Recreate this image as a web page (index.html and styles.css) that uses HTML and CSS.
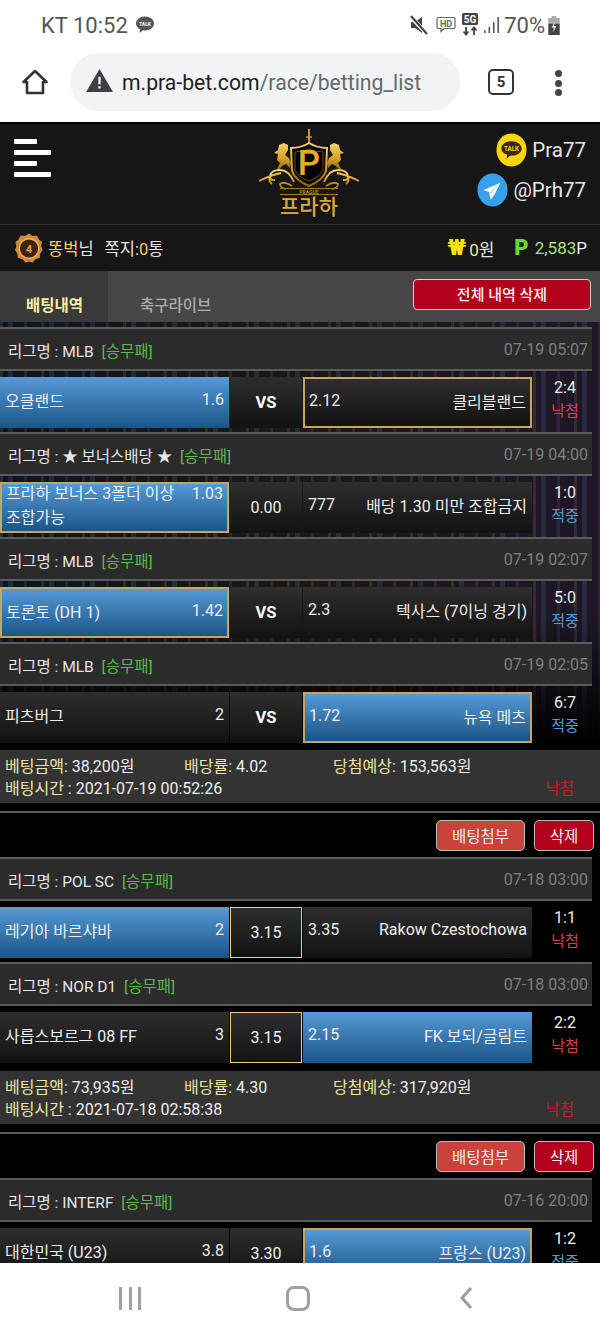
FILE: index.html
```html
<!DOCTYPE html>
<html lang="ko">
<head>
<meta charset="utf-8">
<title>betting list</title>
<link rel="stylesheet" href="styles.css">
</head>
<body>
<div class="page">
  <div class="status">
    <div class="status-left">
      <span>KT 10:52</span>
      <svg class="talk-mini" viewBox="0 0 20 20"><path d="M10 1.500c5 0 9 3 9 7s-4 7-9 7c-.7 0-1.300 0-2-.2L4.500 18l.5-3.800C2.600 13 1 10.900 1 8.500c0-4 4-7 9-7z" fill="#555"/><text x="10" y="10.800" class="talk-mini-t">TALK</text></svg>
    </div>
    <div class="status-right">
      <svg class="ic-mute" viewBox="0 0 22 22"><path d="M3 8h4l7-5v16l-7-5H3z" fill="#444"/><path d="M2 2l18 19" stroke="#fff" stroke-width="4"/><path d="M3 2l16 18" stroke="#444" stroke-width="2.200"/></svg>
      <svg class="ic-hd" viewBox="0 0 20 18"><path d="M2.500 1.500h15a1.500 1.500 0 0 1 1.500 1.500v8a1.500 1.500 0 0 1-1.500 1.500H8l-3 3v-3H2.500A1.500 1.500 0 0 1 1 11V3a1.500 1.500 0 0 1 1.500-1.500z" fill="none" stroke="#666" stroke-width="1.200"/><text x="10" y="10.500" class="hd-t">HD</text></svg>
      <svg class="ic-5g" viewBox="0 0 18 24"><rect x="1" y="0" width="16" height="12" rx="1.500" fill="#444"/><text x="9" y="10" class="g-t">5G</text><path d="M5 14v7M2.500 18.500 5 21.500l2.500-3M13 22v-7M10.500 17.500 13 14.500l2.500 3" stroke="#444" stroke-width="1.800" fill="none"/></svg>
      <svg class="ic-signal" viewBox="0 0 18 20"><path d="M1 16v3M6 12v7M11 7v12M16 1v18" stroke="#555" stroke-width="1.800"/></svg>
      <span class="pct">70%</span>
      <svg class="ic-batt" viewBox="0 0 12 20"><rect x="3.500" y="0" width="5" height="3" fill="#aaa"/><rect y="2" width="12" height="6" fill="#aaa"/><rect y="8" width="12" height="12" fill="#444"/><path d="M7 6 3.500 12H6l-1 5 3.500-6.500H6z" fill="#fff"/></svg>
    </div>
  </div>

  <div class="toolbar">
    <svg class="ic-home" viewBox="0 0 28 28"><path d="M14 3 2.500 14H6v11h16V14h3.500z" fill="none" stroke="#333" stroke-width="2.600" stroke-linejoin="round"/></svg>
    <div class="url">
      <svg class="ic-warn" viewBox="0 0 28 24"><path d="M14 0 28 24H0z" fill="#3c4043"/><path d="M12.800 8h2.400v8h-2.400zM12.800 18h2.400v2.400h-2.400z" fill="#f1f3f4"/></svg>
      <span class="url-host">m.pra-bet.com</span><span class="url-path">/race/betting_list</span>
    </div>
    <div class="tabs-count">5</div>
    <div class="kebab"><i></i><i></i><i></i></div>
  </div>

  <header class="site-head">
    <div class="burger"><i class="short"></i><i></i><i class="short"></i><i></i></div>
    <div class="logo">
      <svg class="logo-art" viewBox="0 0 110 68">
        <defs>
          <linearGradient id="gold" x1="0" y1="0" x2="0" y2="1"><stop offset="0" stop-color="#f7d36a"/><stop offset=".55" stop-color="#d8a22c"/><stop offset="1" stop-color="#8f6512"/></linearGradient>
        </defs>
        <path d="M55 1v15" stroke="#c79a35" stroke-width="2"/><path d="M52 9h6" stroke="#c79a35" stroke-width="1.500"/>
        <path d="M37 20q10 0 18-5 8 5 18 5l-1 23q-3 9-17 15-14-6-17-15z" fill="#0a0805" stroke="url(#gold)" stroke-width="2"/>
        <path d="M41 24q8 0 14-3 6 3 14 3v18q-3 7-14 11-11-4-14-11z" fill="#000" stroke="#6e4f12" stroke-width="1"/>
        <text x="55" y="47" class="logo-p">P</text>
        <path d="M36 40l-4-4-4 2-3 4-2-1 3-6-3-3 1-6-4-1 4-3 1-5 5-2 4 2 0 5-3 5 4 3 2 5z" fill="url(#gold)"/>
        <path d="M74 40l4-4 4 2 3 4 2-1-3-6 3-3-1-6 4-1-4-3-1-5-5-2-4 2 0 5 3 5-4 3-2 5z" fill="url(#gold)"/>
        <path d="M40 54q-5-12-14-12-9 0-10 6 0 5 5 4M27 45q-10 2-22 8M38 58q-8-5-12-2 0 4 6 5M16 48q-2 5 2 8" fill="none" stroke="url(#gold)" stroke-width="1.800"/>
        <path d="M70 54q5-12 14-12 9 0 10 6 0 5-5 4M83 45q10 2 22 8M72 58q8-5 12-2 0 4-6 5M94 48q2 5-2 8" fill="none" stroke="url(#gold)" stroke-width="1.800"/>
        <path d="M26 60.500h58M26 66.500h58" stroke="#a47d22" stroke-width="1"/>
        <text x="55" y="65.500" class="logo-small">PRAGUE</text>
      </svg>
      <span class="logo-kr">프라하</span>
    </div>
    <div class="contacts">
      <div class="contact">
        <svg class="ic-kakao" viewBox="0 0 32 34"><ellipse cx="16" cy="17" rx="15.500" ry="17" fill="#fcd40a"/><path d="M16 8c6 0 10.500 3.300 10.500 7.500S22 23 16 23l-1.500-.1L11 26l.500-4C7.800 20.800 5.500 18.400 5.500 15.500 5.500 11.300 10 8 16 8z" fill="#3e2723"/><text x="16" y="18" class="kk-t">TALK</text></svg>
        <span>Pra77</span>
      </div>
      <div class="contact">
        <svg class="ic-tg" viewBox="0 0 32 34"><ellipse cx="16" cy="17" rx="15.500" ry="17" fill="#37a0ea"/><path d="M24 9.500 6.500 17l6 2 1.500 8 4-5z" fill="#fff"/><path d="M12.500 19 24 9.500 15 21z" fill="#d2e8f7"/></svg>
        <span>@Prh77</span>
      </div>
    </div>
  </header>

  <div class="user-row">
    <div class="user-left">
      <svg class="badge" viewBox="0 0 30 32"><path d="M15 0l4 2.500 4.500-.5 2 4 3.500 3-1 4.500 1.500 4-2.500 4-.5 4.500-4.500 1.500-3 3.500-4-1-4 1-3-3.500L3 26l-.5-4.500L0 17.500l1.500-4-1-4.500L4 6l2-4 4.500.5z" fill="#cf8a3a"/><circle cx="15" cy="16" r="10.500" fill="#3d2410" stroke="#f0b060" stroke-width="1.500"/><text x="15" y="20.500" class="badge-t">4</text></svg>
      <span class="nick">똥벅</span><span>님</span>
      <span class="memo">쪽지:<b class="gold">0</b>통</span>
    </div>
    <div class="user-right">
      <span class="won">₩</span><span class="won-v"><b class="lgold">0</b>원</span>
      <span class="pt">P</span><span class="pt-v">2,583<b class="white">P</b></span>
    </div>
  </div>

  <div class="tabs">
    <div class="tab tab-on">배팅내역</div>
    <div class="tab">축구라이브</div>
    <button class="del-all">전체 내역 삭제</button>
  </div>

  <main class="content">
    <section class="group group-img">
      <div class="league"><span>리그명 : MLB <em>[승무패]</em></span><time>07-19 05:07</time></div>
      <div class="match">
        <div class="cell team blue plain"><span>오클랜드</span><span>1.6</span></div>
        <div class="cell mid vs">VS</div>
        <div class="cell team sel"><span>2.12</span><span>클리블랜드</span></div>
        <div class="score"><span>2:4</span><span class="lose">낙첨</span></div>
      </div>
      <div class="league"><span>리그명 : ★ 보너스배당 ★ <em>[승무패]</em></span><time>07-19 04:00</time></div>
      <div class="match">
        <div class="cell team blue sel multi"><span class="two">프라하 보너스 3폴더 이상 조합가능</span><span>1.03</span></div>
        <div class="cell mid">0.00</div>
        <div class="cell team"><span>777</span><span>배당 1.30 미만 조합금지</span></div>
        <div class="score"><span>1:0</span><span class="win">적중</span></div>
      </div>
      <div class="league"><span>리그명 : MLB <em>[승무패]</em></span><time>07-19 02:07</time></div>
      <div class="match">
        <div class="cell team blue sel"><span>토론토 (DH 1)</span><span>1.42</span></div>
        <div class="cell mid vs">VS</div>
        <div class="cell team"><span>2.3</span><span>텍사스 (7이닝 경기)</span></div>
        <div class="score"><span>5:0</span><span class="win">적중</span></div>
      </div>
      <div class="league"><span>리그명 : MLB <em>[승무패]</em></span><time>07-19 02:05</time></div>
      <div class="match">
        <div class="cell team"><span>피츠버그</span><span>2</span></div>
        <div class="cell mid vs">VS</div>
        <div class="cell team blue sel"><span>1.72</span><span>뉴욕 메츠</span></div>
        <div class="score"><span>6:7</span><span class="win">적중</span></div>
      </div>
    </section>
    <div class="summary">
      <div class="sum-line"><span class="s1"><u>베팅금액:</u> 38,200원</span><span class="s2"><u>배당률:</u> 4.02</span><span><u>당첨예상:</u> 153,563원</span></div>
      <div class="sum-line sum-last"><span><u>배팅시간 :</u> 2021-07-19 00:52:26</span><span class="sum-res">낙첨</span></div>
    </div>
    <div class="actions"><button class="btn-attach">배팅첨부</button><button class="btn-del">삭제</button></div>

    <section class="group">
      <div class="league"><span>리그명 : POL SC <em>[승무패]</em></span><time>07-18 03:00</time></div>
      <div class="match">
        <div class="cell team blue plain"><span>레기아 바르샤바</span><span>2</span></div>
        <div class="cell mid sel-mid">3.15</div>
        <div class="cell team"><span>3.35</span><span>Rakow Czestochowa</span></div>
        <div class="score"><span>1:1</span><span class="lose">낙첨</span></div>
      </div>
      <div class="league"><span>리그명 : NOR D1 <em>[승무패]</em></span><time>07-18 03:00</time></div>
      <div class="match">
        <div class="cell team"><span>사릅스보르그 08 FF</span><span>3</span></div>
        <div class="cell mid sel-mid">3.15</div>
        <div class="cell team blue plain"><span>2.15</span><span>FK 보되/글림트</span></div>
        <div class="score"><span>2:2</span><span class="lose">낙첨</span></div>
      </div>
    </section>
    <div class="summary">
      <div class="sum-line"><span class="s1"><u>베팅금액:</u> 73,935원</span><span class="s2"><u>배당률:</u> 4.30</span><span><u>당첨예상:</u> 317,920원</span></div>
      <div class="sum-line sum-last"><span><u>배팅시간 :</u> 2021-07-18 02:58:38</span><span class="sum-res">낙첨</span></div>
    </div>
    <div class="actions"><button class="btn-attach">배팅첨부</button><button class="btn-del">삭제</button></div>

    <section class="group">
      <div class="league"><span>리그명 : INTERF <em>[승무패]</em></span><time>07-16 20:00</time></div>
      <div class="match">
        <div class="cell team"><span>대한민국 (U23)</span><span>3.8</span></div>
        <div class="cell mid">3.30</div>
        <div class="cell team blue sel"><span>1.6</span><span>프랑스 (U23)</span></div>
        <div class="score"><span>1:2</span><span class="win">적중</span></div>
      </div>
    </section>
  </main>

  <nav class="navbar">
    <div class="nav-recent"><i></i><i></i><i></i></div>
    <div class="nav-home"></div>
    <svg class="nav-back" viewBox="0 0 14 24"><path d="M12 2 3 12l9 10" fill="none" stroke="#9c9c9c" stroke-width="3"/></svg>
  </nav>
</div>
</body>
</html>
```
FILE: styles.css
```css
* { box-sizing: border-box; }
html, body { margin: 0; padding: 0; background: #000; }
body { font-family: Roboto, "Noto Sans CJK KR", sans-serif; color: #eee; }
.page { width: 600px; height: 1333px; display: flex; flex-direction: column; overflow: hidden; background: #000; }

/* status bar */
.status { height: 50px; flex: none; background: #fff; display: flex; justify-content: space-between; align-items: center; padding: 0 40px 0 41px; color: #555; font-size: 22px; }
.status-left { display: flex; align-items: center; gap: 7px; }
.talk-mini { width: 20px; height: 20px; }
.talk-mini-t { font: bold 5px Roboto, sans-serif; fill: #fff; text-anchor: middle; }
.status-right { display: flex; align-items: center; }
.ic-mute { width: 22px; height: 22px; margin-right: 6px; }
.ic-hd { width: 20px; height: 18px; margin-right: 5px; }
.hd-t { font: bold 9px Roboto, sans-serif; fill: #666; text-anchor: middle; }
.ic-5g { width: 18px; height: 24px; margin-right: 5px; }
.g-t { font: bold 10px Roboto, sans-serif; fill: #fff; text-anchor: middle; }
.ic-signal { width: 16px; height: 18px; margin-right: 4px; }
.pct { margin-right: 3px; }
.ic-batt { width: 12px; height: 19px; }

/* browser toolbar */
.toolbar { height: 72px; flex: none; background: #fff; display: flex; align-items: flex-start; padding: 3px 0 0 21px; }
.ic-home { width: 28px; height: 28px; margin-top: 15px; }
.url { width: 390px; height: 58px; margin-left: 21px; border-radius: 29px; background: #f1f3f4; display: flex; align-items: center; padding-left: 16px; font-size: 21.200px; color: #222; }
.ic-warn { width: 27px; height: 23px; margin-right: 9px; margin-top: -3px; }
.url-path { color: #66696d; }
.tabs-count { width: 26px; height: 26px; margin: 16px 0 0 28px; border: 2.500px solid #333; border-radius: 5px; font-size: 15px; font-weight: 700; color: #333; display: flex; align-items: center; justify-content: center; }
.kebab { margin: 17px 0 0 41px; display: flex; flex-direction: column; gap: 2.500px; }
.kebab i { width: 7px; height: 7px; border-radius: 50%; background: #444; display: block; }

/* site header */
.site-head { height: 103px; flex: none; background: #161616; border-top: 2px solid #000; border-bottom: 1px solid #2d2d2d; display: grid; grid-template-columns: 254px 110px 1fr; padding-right: 14px; }
.burger { display: flex; flex-direction: column; gap: 6px; padding: 15px 0 0 14px; }
.burger i { display: block; height: 5px; width: 37px; border-radius: 1px; background: #fff; }
.burger i.short { width: 23px; }
.logo { display: flex; flex-direction: column; align-items: center; padding-top: 4px; }
.logo-art { width: 110px; height: 68px; flex: none; }
.logo-p { font: 500 35px Roboto, sans-serif; fill: #eaa92b; text-anchor: middle; }
.logo-small { font: 700 5px Roboto, sans-serif; fill: #a88430; text-anchor: middle; }
.logo-kr { font: 500 21px/19px "Noto Sans CJK KR", sans-serif; color: #dcaa38; margin-top: 0; }
.contacts { display: flex; flex-direction: column; align-items: flex-end; gap: 6px; padding-top: 9px; }
.contact { display: flex; align-items: center; gap: 5px; font-size: 20.500px; color: #e8e8e8; height: 34px; }
.ic-kakao, .ic-tg { width: 31px; height: 34px; }
.kk-t { font: 700 6.500px Roboto, sans-serif; fill: #fcd40a; text-anchor: middle; }

/* user row */
.user-row { height: 46px; flex: none; background: #161616; display: flex; justify-content: space-between; align-items: center; padding: 0 13px 0 15px; font-size: 16.500px; color: #e6e6e6; }
.user-left, .user-right { display: flex; align-items: center; }
.user-right { font-size: 17px; }
.badge { width: 28px; height: 31px; margin-right: 5px; }
.badge-t { font: 700 12px Roboto, sans-serif; fill: #e5a050; text-anchor: middle; }
.nick { color: #f7cf5e; }
.memo { margin-left: 11px; }
.gold { color: #f7cf5e; font-weight: 400; }
.lgold { color: #f7e2a2; font-weight: 400; }
.white { color: #eee; font-weight: 400; }
.won { color: #f7e400; font-weight: 900; font-size: 22px; line-height: 1; margin-right: 3px; }
.won-v { margin-right: 20px; }
.pt { color: #6fd62e; font-weight: 900; font-size: 22px; line-height: 1; margin-right: 6px; }
.pt-v { color: #a8e27a; }

/* tabs */
.tabs { height: 51px; flex: none; background: #474747; display: flex; align-items: stretch; position: relative; font-size: 15.500px; }
.tab { padding-top: 22px; color: #a8aeb8; width: 139px; padding-left: 32px; font-weight: 500; }
.tab-on { width: 108px; background: #3a3a3a; color: #f6f1a8; font-weight: 700; padding-left: 26px; }
.del-all { position: absolute; right: 9px; top: 8px; width: 178px; height: 31px; border: 1px solid #d0d0d0; border-radius: 4px; background: #b3001c; color: #f2f2f2; font: 500 15px Roboto, "Noto Sans CJK KR", sans-serif; padding: 0 0 3px; }

/* list */
.content { flex: 1; min-height: 0; overflow: hidden; background: #000; }
.group { margin-bottom: 8px; }
.group-img { padding-top: 5px; margin-bottom: 7px; background:
  linear-gradient(to bottom, transparent 0, transparent 70%, #000 100%),
  repeating-linear-gradient(90deg, rgba(150,125,95,.2) 0 3px, transparent 3px 8px, rgba(70,105,150,.24) 8px 13px, transparent 13px 24px, rgba(120,90,130,.2) 24px 27px, transparent 27px 41px),
  linear-gradient(90deg, #0b1522 0, #1c1813 50%, #1e1628 100%); }
.league { width: 592px; height: 44px; border-top: 2px solid #5b5b5b; border-bottom: 2px solid #5b5b5b; background: #2b2b2b; display: flex; justify-content: space-between; align-items: center; padding: 1px 4px 0 8px; font-size: 15.500px; color: #e6e6e6; margin-bottom: 6px; }
.league em { font-style: normal; color: #5fb651; margin-left: 4px; }
.league time { color: #7f7f7f; font-size: 16px; }
.match { display: grid; grid-template-columns: 229px 72px 229px 64px; column-gap: 1px; height: 51px; margin-bottom: 4px; }
.cell { background: linear-gradient(to bottom, #2e2e2e, #121212); font-size: 16px; color: #eee; }
.team { display: flex; justify-content: space-between; align-items: center; padding: 0 5px 6px; }
.blue { background: linear-gradient(to bottom, #5599d6, #1b5586); }
.plain { border: 0; }
.sel { border: 2px solid #c4a660; padding: 0 4px 4px 4px; }
.multi { align-items: flex-start; padding-top: 0; padding-bottom: 0; }
.multi .two { width: 178px; line-height: 24px; margin-top: -2px; }
.multi span:last-child { line-height: 24px; margin-top: -2px; }
.mid { display: flex; align-items: center; justify-content: center; }
.vs { font-weight: 700; font-size: 16.500px; color: #fff; }
.sel-mid { border: 1.500px solid #f0cd7e; }
.score { display: flex; flex-direction: column; align-items: center; justify-content: flex-start; gap: 1px; font-size: 16px; color: #eee; line-height: 22px; }
.lose { color: #d9433f; font-size: 15px; }
.win { color: #5a9edc; font-size: 15px; }

.summary { height: 53px; background: #333; padding: 4px 26px 0 5px; font-size: 16px; color: #eee; }
.sum-line { display: flex; height: 22px; align-items: center; }
.sum-last { justify-content: space-between; }
.summary u { text-decoration: none; color: #ece6a6; }
.s1 { width: 179px; }
.s2 { width: 149px; }
.sum-res { color: #c81e1e; font-size: 15.500px; }
.actions { height: 46px; margin-top: 8px; border-top: 2px solid #5a5a5a; display: flex; justify-content: flex-end; align-items: flex-start; gap: 9px; padding: 7px 6px 0 0; }
.actions button { height: 31px; border: 1px solid #bcbcbc; border-radius: 5px; color: #f0f0f0; font: 15.500px Roboto, "Noto Sans CJK KR", sans-serif; padding: 0 0 2px; }
.btn-attach { width: 89px; background: #c9423b; }
.btn-del { width: 60px; background: #b3001c; }

/* android nav */
.navbar { height: 70px; flex: none; background: #fff; display: grid; grid-template-columns: 260px 75px 1fr; align-items: center; }
.nav-recent { display: flex; gap: 6.500px; justify-self: end; margin-right: 119px; }
.nav-recent i { display: block; width: 3px; height: 23px; background: #a0a0a0; }
.nav-home { width: 24px; height: 25px; border: 3px solid #a0a0a0; border-radius: 8px; justify-self: center; }
.nav-back { width: 14px; height: 24px; margin-left: 124px; }
```
